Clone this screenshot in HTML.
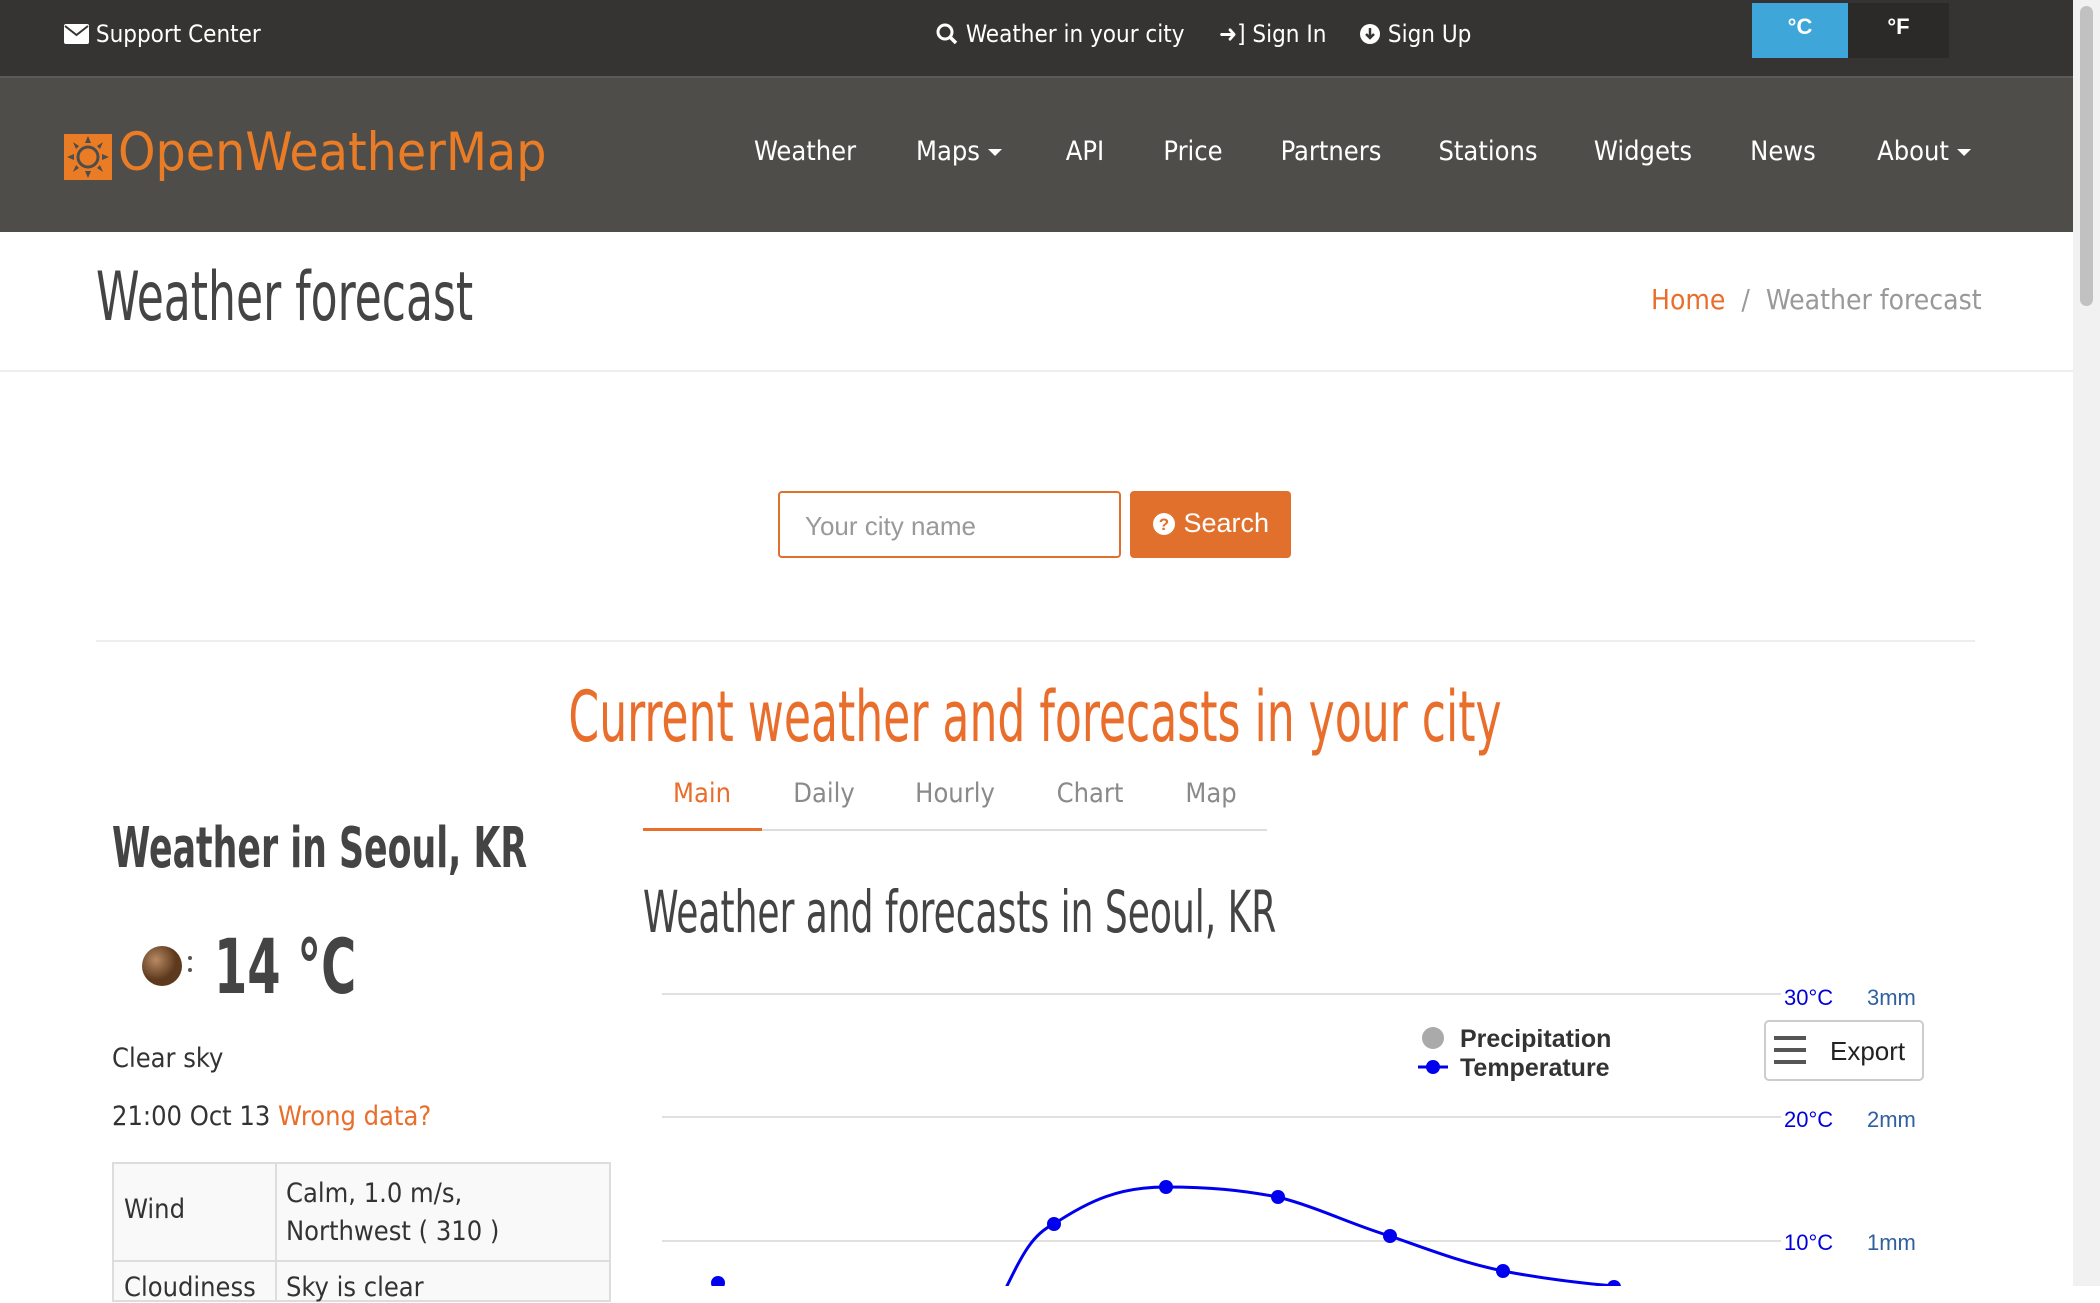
<!DOCTYPE html>
<html><head><meta charset="utf-8"><style>
*{margin:0;padding:0;box-sizing:border-box}
body{width:2100px;height:1286px;overflow:hidden;background:#fff;font-family:"Liberation Sans",sans-serif;position:relative}
.a{position:absolute;white-space:nowrap}
.n{font-family:"Liberation Sans Narrow","DejaVu Sans Condensed","Liberation Sans",sans-serif}
.c{transform-origin:0 0}
#top{position:absolute;left:0;top:0;width:2073px;height:78px;background:#353432;border-bottom:2px solid #5c5b58}
#nav{position:absolute;left:0;top:78px;width:2073px;height:154px;background:#4e4d4a}
.tw{color:#fff;font-size:24px;top:20px}
.nv{color:#fff;font-size:27px;top:136px;transform:translateX(-50%)}
.tab{font-size:27px;color:#8a8a8a;top:778px;transform:translateX(-50%)}
.car{display:inline-block;border-left:7px solid transparent;border-right:7px solid transparent;border-top:7px solid #fff;vertical-align:middle;margin-left:8px}
</style></head><body>
<div id="top"></div>
<div id="nav"></div>
<div class="a n tw" style="left:64px"><svg width="25" height="20" viewBox="0 0 25 20" style="vertical-align:-2px"><rect x="0" y="0" width="25" height="20" rx="2" fill="#fff"/><path d="M1 2 L12.5 11 L24 2" stroke="#353432" stroke-width="2" fill="none"/></svg> Support Center</div>
<div class="a n tw" style="left:935px"><svg width="24" height="24" viewBox="0 0 24 24" style="vertical-align:-4px"><circle cx="10" cy="10" r="7" stroke="#fff" stroke-width="3" fill="none"/><path d="M15 15 L21 21" stroke="#fff" stroke-width="3.5"/></svg> Weather in your city</div>
<div class="a n tw" style="left:1219px">➜] Sign In</div>
<div class="a n tw" style="left:1359px"><svg width="22" height="22" viewBox="0 0 22 22" style="vertical-align:-3px"><circle cx="11" cy="11" r="10" fill="#fff"/><path d="M11 5 V15 M7 11 L11 15 L15 11" stroke="#353432" stroke-width="2.5" fill="none"/></svg> Sign Up</div>
<div class="a" style="left:1752px;top:3px;width:96px;height:55px;background:#3ea6d8;color:#fff;font-size:22px;font-weight:bold;text-align:center;line-height:48px">°C</div>
<div class="a" style="left:1848px;top:3px;width:101px;height:55px;background:#2b2a28;color:#fff;font-size:22px;font-weight:bold;text-align:center;line-height:48px">°F</div>
<div class="a" style="left:64px;top:134px;width:48px;height:46px;background:#eb7c26"><svg width="48" height="46" viewBox="0 0 48 46"><circle cx="24" cy="23" r="10" stroke="#4e4d4a" stroke-width="3" fill="none"/><g fill="#4e4d4a"><path d="M24 2 L27 9 L21 9Z M24 44 L27 37 L21 37Z M3 23 L10 20 L10 26Z M45 23 L38 20 L38 26Z M9 8 L15 12 L12 15Z M39 8 L33 12 L36 15Z M9 38 L15 34 L12 31Z M39 38 L33 34 L36 31Z"/></g></svg></div>
<div class="a" style="left:118px;top:122px;font-size:53px;color:#eb7c26;font-family:'DejaVu Sans Condensed','Liberation Sans',sans-serif">OpenWeatherMap</div>
<div class="a n nv" style="left:805px">Weather</div>
<div class="a n nv" style="left:959px">Maps<span class="car"></span></div>
<div class="a n nv" style="left:1085px">API</div>
<div class="a n nv" style="left:1193px">Price</div>
<div class="a n nv" style="left:1331px">Partners</div>
<div class="a n nv" style="left:1488px">Stations</div>
<div class="a n nv" style="left:1643px">Widgets</div>
<div class="a n nv" style="left:1783px">News</div>
<div class="a n nv" style="left:1924px">About<span class="car"></span></div>
<div class="a" style="left:2073px;top:0;width:27px;height:1286px;background:#f1f1f1"><div style="margin:6px 0 0 7px;width:13px;height:300px;border-radius:7px;background:#c1c1c1"></div></div>
<div class="a n c" style="left:96px;top:258px;font-size:68px;color:#444;transform:scaleX(.72)">Weather forecast</div>
<div class="a n" style="left:1651px;top:283px;font-size:28px;color:#999"><span style="color:#e96e2c">Home</span> &nbsp;/&nbsp; Weather forecast</div>
<div class="a" style="left:0;top:370px;width:2073px;height:2px;background:#eee"></div>
<div class="a" style="left:778px;top:491px;width:343px;height:67px;border:2px solid #e0702b;border-radius:4px;font-size:26px;color:#999;padding:18px 0 0 25px">Your city name</div>
<div class="a" style="left:1130px;top:491px;width:161px;height:67px;background:#e0702b;border-radius:4px;color:#fff;font-size:27px;text-align:center;line-height:65px"><svg width="24" height="24" viewBox="0 0 24 24" style="vertical-align:-4px"><circle cx="12" cy="12" r="11" fill="#fff"/><text x="12" y="18" font-size="17" font-weight="bold" text-anchor="middle" fill="#e0702b" font-family="Liberation Sans">?</text></svg> Search</div>
<div class="a" style="left:96px;top:640px;width:1879px;height:2px;background:#eee"></div>
<div class="a n" style="left:1035px;top:676px;transform:translateX(-50%) scaleX(.7);font-size:70px;color:#e96e2c">Current weather and forecasts in your city</div>
<div class="a n tab" style="left:702px;color:#e96e2c">Main</div>
<div class="a n tab" style="left:824px">Daily</div>
<div class="a n tab" style="left:955px">Hourly</div>
<div class="a n tab" style="left:1090px">Chart</div>
<div class="a n tab" style="left:1211px">Map</div>
<div class="a" style="left:643px;top:829px;width:624px;height:2px;background:#ddd"></div>
<div class="a" style="left:643px;top:828px;width:119px;height:3px;background:#e96e2c"></div>
<div class="a n c" style="left:112px;top:816px;font-size:56px;font-weight:bold;color:#444;transform:scaleX(.69)">Weather in Seoul, KR</div>
<svg class="a" style="left:138px;top:944px" width="56" height="44" viewBox="0 0 56 44"><defs><radialGradient id="g" cx="35%" cy="35%"><stop offset="0" stop-color="#b88a63"/><stop offset="1" stop-color="#5d3a1e"/></radialGradient></defs><circle cx="24" cy="22" r="20" fill="url(#g)"/><circle cx="52" cy="14" r="2" fill="#555"/><circle cx="52" cy="26" r="2" fill="#555"/></svg>
<div class="a n c" style="left:214px;top:922px;font-size:76px;font-weight:bold;color:#444;transform:scaleX(.7)">14 °C</div>
<div class="a n" style="left:112px;top:1043px;font-size:27px;color:#333">Clear sky</div>
<div class="a n" style="left:112px;top:1101px;font-size:27px;color:#333">21:00 Oct 13 <span style="color:#e96e2c">Wrong data?</span></div>
<div class="a" style="left:112px;top:1162px;width:499px;height:140px;border:2px solid #ddd;background:#f9f9f9"></div>
<div class="a" style="left:275px;top:1162px;width:2px;height:140px;background:#ddd"></div>
<div class="a" style="left:112px;top:1260px;width:499px;height:2px;background:#ddd"></div>
<div class="a n" style="left:124px;top:1194px;font-size:27px;color:#333">Wind</div>
<div class="a n" style="left:286px;top:1175px;font-size:27px;color:#333;line-height:38px">Calm, 1.0 m/s,<br>Northwest ( 310 )</div>
<div class="a n" style="left:124px;top:1272px;font-size:27px;color:#333">Cloudiness</div>
<div class="a n" style="left:286px;top:1272px;font-size:27px;color:#333">Sky is clear</div>
<div class="a n c" style="left:643px;top:878px;font-size:58px;color:#444;transform:scaleX(.69)">Weather and forecasts in Seoul, KR</div>
<svg class="a" style="left:0;top:0" width="2073" height="1286">
<g stroke="#e0e0e0" stroke-width="2"><line x1="662" y1="994" x2="1781" y2="994"/><line x1="662" y1="1117" x2="1781" y2="1117"/><line x1="662" y1="1241" x2="1781" y2="1241"/></g>
<g font-family="Liberation Sans" font-size="22"><text x="1784" y="1005" fill="#0000dd">30°C</text><text x="1867" y="1005" fill="#3060a0">3mm</text><text x="1784" y="1127" fill="#0000dd">20°C</text><text x="1867" y="1127" fill="#3060a0">2mm</text><text x="1784" y="1250" fill="#0000dd">10°C</text><text x="1867" y="1250" fill="#3060a0">1mm</text></g>
<path d="M1000 1300 C1020 1260 1030 1235 1054 1224 C1090 1200 1120 1187 1166 1187 C1210 1187 1240 1190 1278 1197 C1320 1208 1350 1224 1390 1236 C1430 1250 1460 1262 1503 1271 C1550 1280 1590 1284 1614 1286" stroke="#0000ee" stroke-width="3" fill="none"/>
<g fill="#0000ee"><circle cx="718" cy="1283" r="7"/><circle cx="1054" cy="1224" r="7"/><circle cx="1166" cy="1187" r="7"/><circle cx="1278" cy="1197" r="7"/><circle cx="1390" cy="1236" r="7"/><circle cx="1503" cy="1271" r="7"/><circle cx="1614" cy="1287" r="7"/></g>
<circle cx="1433" cy="1038" r="11" fill="#aaa"/>
<line x1="1418" y1="1067" x2="1448" y2="1067" stroke="#0000ee" stroke-width="3"/><circle cx="1433" cy="1067" r="7" fill="#0000ee"/>
<g font-family="Liberation Sans" font-size="25" font-weight="bold" fill="#333"><text x="1460" y="1047">Precipitation</text><text x="1460" y="1076">Temperature</text></g>
<rect x="1765" y="1021" width="158" height="59" rx="4" fill="#fff" stroke="#ccc" stroke-width="2"/>
<g stroke="#555" stroke-width="4"><line x1="1774" y1="1038" x2="1806" y2="1038"/><line x1="1774" y1="1050" x2="1806" y2="1050"/><line x1="1774" y1="1062" x2="1806" y2="1062"/></g>
<text x="1830" y="1060" font-family="Liberation Sans" font-size="26" fill="#222">Export</text>
</svg>
</body></html>
